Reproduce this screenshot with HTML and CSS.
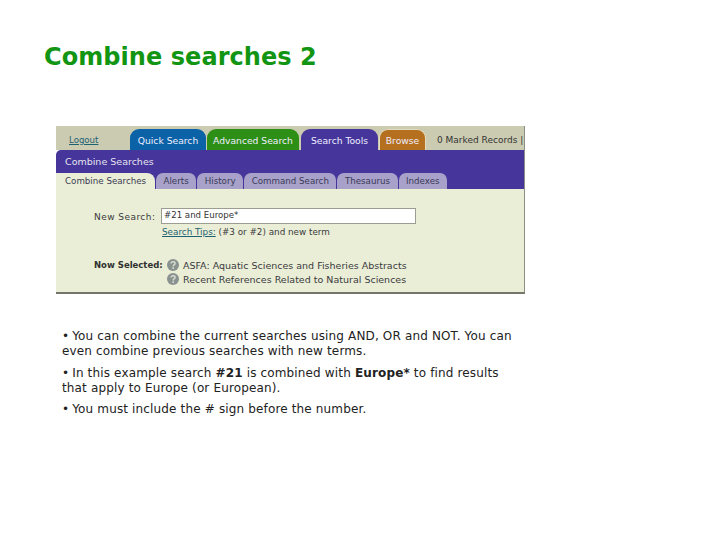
FILE: index.html
```html
<!DOCTYPE html>
<html lang="en">
<head>
<meta charset="utf-8">
<title>Combine searches 2</title>
<link rel="stylesheet" href="styles.css">
</head>
<body>
<main class="slide">
  <h1 class="title">Combine searches 2</h1>
  <section class="shot">
    <div class="topbar">
      <a class="logout">Logout</a>
      <nav class="maintabs">
        <span class="mtab quick">Quick Search</span>
        <span class="mtab advanced">Advanced Search</span>
        <span class="mtab tools">Search Tools</span>
        <span class="mtab browse">Browse</span>
      </nav>
      <span class="marked">0 Marked Records |</span>
    </div>
    <div class="band">
      <div class="band-title">Combine Searches</div>
      <nav class="subtabs">
        <span class="stab active">Combine Searches</span>
        <span class="stab">Alerts</span>
        <span class="stab">History</span>
        <span class="stab">Command Search</span>
        <span class="stab">Thesaurus</span>
        <span class="stab">Indexes</span>
      </nav>
    </div>
    <div class="panel">
      <div class="search-row">
        <span class="search-label">New Search:</span>
        <div class="search-col">
          <div class="search-input">#21 and Europe*</div>
          <div class="tips"><a class="tips-link">Search Tips:</a> (#3 or #2) and new term</div>
        </div>
      </div>
      <div class="selected">
        <span class="selected-label">Now Selected:</span>
        <ul class="dbs">
          <li class="db"><svg class="help" viewBox="0 0 12 12"><circle cx="6" cy="6" r="6" fill="#8a9290"/><path d="M4 4.6C4 3.4 5 2.8 6.1 2.8C7.3 2.8 8.1 3.5 8.1 4.4C8.1 5.7 6.2 5.7 6.2 7.4" fill="none" stroke="#d8dcd0" stroke-width="1.4"/><rect x="5.4" y="8.3" width="1.6" height="1.6" fill="#d8dcd0"/></svg>ASFA: Aquatic Sciences and Fisheries Abstracts</li>
          <li class="db"><svg class="help" viewBox="0 0 12 12"><circle cx="6" cy="6" r="6" fill="#8a9290"/><path d="M4 4.6C4 3.4 5 2.8 6.1 2.8C7.3 2.8 8.1 3.5 8.1 4.4C8.1 5.7 6.2 5.7 6.2 7.4" fill="none" stroke="#d8dcd0" stroke-width="1.4"/><rect x="5.4" y="8.3" width="1.6" height="1.6" fill="#d8dcd0"/></svg>Recent References Related to Natural Sciences</li>
        </ul>
      </div>
    </div>
  </section>
  <section class="notes">
    <p class="note"><span class="dot">•</span> You can combine the current searches using AND, OR and NOT. You can<br>even combine previous searches with new terms.</p>
    <p class="note"><span class="dot">•</span> In this example search <b>#21</b> is combined with <b>Europe*</b> to find results<br>that apply to Europe (or European).</p>
    <p class="note"><span class="dot">•</span> You must include the # sign before the number.</p>
  </section>
</main>
</body>
</html>
```
FILE: styles.css
```css
html, body { margin: 0; padding: 0; background: #fff; }
body { width: 728px; height: 546px; overflow: hidden; font-family: "DejaVu Sans", Verdana, sans-serif; }
.slide { padding: 42px 0 0 44px; }
.title { margin: 0; font-size: 24px; line-height: 30px; font-weight: 700; color: #129512; letter-spacing: .06px; }
.shot { margin: 54px 0 0 12px; width: 469px; height: 168px; box-sizing: border-box; display: flex; flex-direction: column; border-bottom: 2px solid #73776a; border-right: 1px solid #8c8f84; font-size: 9px; color: #3a3a40; }
.topbar { height: 24px; flex: none; background: #cbcbb2; display: flex; align-items: flex-end; }
.logout { width: 74px; padding: 3px 0 0 13px; box-sizing: border-box; align-self: center; color: #1d6272; text-decoration: underline; font-size: 8.6px; }
.maintabs { display: flex; }
.mtab { height: 21px; box-sizing: border-box; padding-top: 6px; border-radius: 9px 9px 0 0; color: #eef; text-align: center; font-size: 9.2px; white-space: nowrap; }
.quick { width: 76px; background: #0b62a6; }
.advanced { width: 92px; margin-left: 1px; background: #2e8f17; }
.tools { width: 77px; background: #46359b; margin-left: 2px; }
.browse { width: 47px; background: #b5701f; margin-left: 1px; border: 1px solid #e4ddc0; border-bottom: 0; padding-top: 5px; }
.marked { margin-left: 11px; padding-top: 3px; align-self: center; white-space: nowrap; color: #333; }
.band { height: 39px; flex: none; background: #46359b; display: flex; flex-direction: column; justify-content: space-between; border-radius: 5px 0 0 0; }
.band-title { padding: 6px 0 0 9px; color: #e4e4ee; font-size: 9.5px; }
.subtabs { display: flex; gap: 1px; }
.stab { height: 16px; box-sizing: border-box; padding: 3px 7.5px 0; background: #a8a2cb; border-radius: 7px 7px 0 0; color: #3a3a55; font-size: 8.7px; white-space: nowrap; }
.stab.active { width: 99px; background: #eaeed6; border-radius: 0 8px 0 0; padding-left: 9px; }
.panel { flex: 1; background: #eaeed6; padding: 19px 0 0 38px; }
.search-row { display: flex; gap: 5px; }
.search-label { width: 62px; padding-top: 4px; letter-spacing: .45px; white-space: nowrap; }
.search-input { width: 255px; height: 16px; box-sizing: border-box; background: #fff; border: 1px solid #9c9c90; padding: 1px 2px; font-size: 8.6px; color: #333; }
.tips { margin-top: 3px; font-size: 8.8px; margin-left: 1px; }
.tips-link { color: #1d6272; text-decoration: underline; }
.selected { display: flex; margin-top: 21px; }
.selected-label { width: 73px; padding-top: 2px; font-weight: 700; font-size: 8.5px; color: #2f3030; white-space: nowrap; }
.dbs { list-style: none; margin: 0; padding: 0; }
.db { height: 14px; display: flex; align-items: center; gap: 4px; font-size: 9.5px; white-space: nowrap; }
.help { width: 12px; height: 12px; flex: none; }
.notes { margin: 35px 0 0 18px; font-size: 12px; color: #222; }
.note { margin: 0 0 6.5px; line-height: 15px; white-space: nowrap; letter-spacing: .15px; }
.note b { font-weight: 700; }
.dot { font-size: 12px; margin-right: -1px; }
```
